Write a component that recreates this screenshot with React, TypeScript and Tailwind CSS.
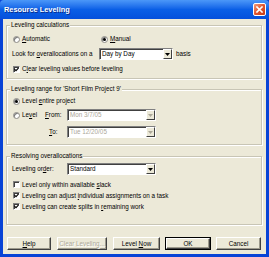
import React from 'react';

const U = ({ children }: { children: React.ReactNode }) => <span className="underline underline-offset-[1px]">{children}</span>;

const Radio = ({ checked }: { checked?: boolean }) => (
  <span className="w-[7px] h-[7px] rounded-full bg-white border border-[#8d8b85] shadow-[inset_1px_1px_0_#7a7a7a] flex items-center justify-center shrink-0">
    {checked && <span className="w-[3px] h-[3px] rounded-full bg-black" />}
  </span>
);

const Check = ({ checked }: { checked?: boolean }) => (
  <span className="w-[7px] h-[7px] bg-white border-t border-l border-[#808080] border-b border-r border-b-white border-r-white shadow-[inset_1px_1px_0_#404040] flex items-center justify-center shrink-0">
    {checked && (
      <svg width="5" height="5" viewBox="0 0 5 5">
        <path d="M0.5 2.2 L2 3.7 L4.6 0.8" stroke="#000" strokeWidth="1.1" fill="none" />
      </svg>
    )}
  </span>
);

const Select = ({ value, width, disabled }: { value: string; width: string; disabled?: boolean }) => (
  <div className={`${width} h-[12px] flex bg-white border-t border-l border-[#808080] border-b border-r border-b-white border-r-white shadow-[inset_1px_1px_0_#404040]`}>
    <span className={`flex-1 pl-[2px] leading-[10px] ${disabled ? 'text-[#aca899]' : 'text-black'}`}>{value}</span>
    <span className="w-[9px] h-full bg-[#ECE9D8] border-t border-l border-white border-b border-r border-b-[#404040] border-r-[#404040] flex items-center justify-center">
      <svg width="5" height="3" viewBox="0 0 5 3">
        <path d="M0 0 H5 L2.5 3 Z" fill={disabled ? '#aca899' : '#000'} />
      </svg>
    </span>
  </div>
);

const Group = ({ title, className, children }: { title: string; className: string; children: React.ReactNode }) => (
  <div className={`relative border border-[#c8c5b5] shadow-[1px_1px_0_#fff,inset_1px_1px_0_#fff] px-[6px] ${className}`}>
    <span className="absolute -top-[5px] left-[3px] bg-[#ECE9D8] px-[1px] leading-[8px]">{title}</span>
    {children}
  </div>
);

const Button = ({ children, width, disabled, primary }: { children: React.ReactNode; width: string; disabled?: boolean; primary?: boolean }) => (
  <div className={`${width} h-[13px] ${primary ? 'border border-black' : ''} flex shrink-0`}>
    <div className={`flex-1 bg-[#ECE9D8] border-t border-l border-white border-b border-r border-b-[#404040] border-r-[#404040] shadow-[inset_-1px_-1px_0_#9d9a8c] flex items-center justify-center whitespace-nowrap ${disabled ? 'text-[#aca899] [text-shadow:1px_1px_0_#fff]' : 'text-black'}`}>
      {children}
    </div>
  </div>
);

export default function App() {
  return (
    <div className="w-[269px] h-[257px] bg-[#0843d6] flex flex-col font-['Liberation_Sans',Arial,sans-serif] text-[6.3px] text-black overflow-hidden">
      <div className="h-[19px] shrink-0 rounded-t-[4px] bg-gradient-to-b from-[#4b97f8] via-[#0a5fe6] to-[#0550dc] flex items-center justify-between pl-[4px] pr-[3px]">
        <span className="text-white font-bold text-[7.4px] [text-shadow:1px_1px_0_#0a2c8a]">Resource Leveling</span>
        <span className="w-[13px] h-[13px] rounded-[2px] border border-white bg-gradient-to-br from-[#f09a7a] via-[#e0552e] to-[#c63a12] flex items-center justify-center">
          <svg width="7" height="7" viewBox="0 0 7 7">
            <path d="M1 1 L6 6 M6 1 L1 6" stroke="#fff" strokeWidth="1.6" strokeLinecap="square" />
          </svg>
        </span>
      </div>

      <div className="flex-1 mx-[3px] mb-[3px] bg-[#ECE9D8] pl-[3px] pr-[4px] pt-[6px] flex flex-col">
        <Group title="Leveling calculations" className="pt-[7px] pb-[3px]">
          <div className="h-[12px] flex items-center">
            <div className="w-[88px] flex items-center gap-[2px]">
              <Radio />
              <span><U>A</U>utomatic</span>
            </div>
            <div className="flex items-center gap-[2px]">
              <Radio checked />
              <span><U>M</U>anual</span>
            </div>
          </div>
          <div className="h-[12px] mt-[3px] flex items-center">
            <span className="w-[87px] -ml-[1px]">Look for <U>o</U>verallocations on a</span>
            <Select value="Day by Day" width="w-[74px]" />
            <span className="ml-[3px]">basis</span>
          </div>
          <div className="h-[12px] mt-[3px] flex items-center gap-[2px]">
            <Check checked />
            <span>C<U>l</U>ear leveling values before leveling</span>
          </div>
        </Group>

        <Group title="Leveling range for 'Short Film Project 9'" className="mt-[10px] pt-[5px] pb-[6px]">
          <div className="h-[12px] flex items-center gap-[2px]">
            <Radio checked />
            <span>Level <U>e</U>ntire project</span>
          </div>
          <div className="h-[12px] mt-[2px] flex items-center">
            <div className="w-[32px] flex items-center gap-[2px]">
              <Radio />
              <span>Le<U>v</U>el</span>
            </div>
            <span className="w-[22px]"><U>F</U>rom:</span>
            <Select value="Mon 3/7/05" width="w-[89px]" disabled />
          </div>
          <div className="h-[12px] mt-[5px] flex items-center">
            <span className="w-[18px] ml-[36px]"><U>T</U>o:</span>
            <Select value="Tue 12/20/05" width="w-[89px]" disabled />
          </div>
        </Group>

        <Group title="Resolving overallocations" className="mt-[11px] pt-[6px] pb-[12px]">
          <div className="h-[12px] flex items-center">
            <span className="w-[55px] -ml-[1px]">Leveling or<U>d</U>er:</span>
            <Select value="Standard" width="w-[89px]" />
          </div>
          <div className="mt-[4px] flex flex-col">
            <div className="h-[11px] flex items-center gap-[2px]">
              <Check />
              <span>Level only within available <U>s</U>lack</span>
            </div>
            <div className="h-[11px] flex items-center gap-[2px]">
              <Check checked />
              <span>Leveling can adjust <U>i</U>ndividual assignments on a task</span>
            </div>
            <div className="h-[11px] flex items-center gap-[2px]">
              <Check checked />
              <span>Leveling can create splits in <U>r</U>emaining work</span>
            </div>
          </div>
        </Group>

        <div className="mt-[12px] pl-[1px] flex">
          <Button width="w-[44px]"><span><U>H</U>elp</span></Button>
          <div className="ml-[6px]"><Button width="w-[50px]" disabled><span>Clear Leveling...</span></Button></div>
          <div className="ml-[6px]"><Button width="w-[47px]"><span>Level <U>N</U>ow</span></Button></div>
          <div className="ml-[5px]"><Button width="w-[46px]" primary><span>OK</span></Button></div>
          <div className="ml-[5px]"><Button width="w-[45px]"><span>Cancel</span></Button></div>
        </div>
      </div>
    </div>
  );
}
